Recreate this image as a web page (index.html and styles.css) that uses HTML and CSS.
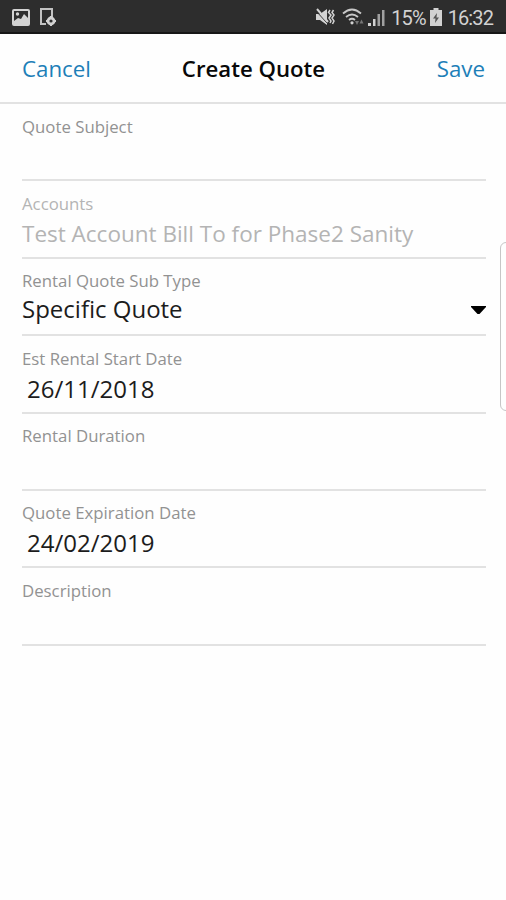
FILE: index.html
```html
<!DOCTYPE html>
<html lang="en">
<head>
<meta charset="utf-8">
<title>Create Quote</title>
<link rel="stylesheet" href="styles.css">
</head>
<body>
<div class="status">
  <div class="status-left">
    <svg width="18" height="17" viewBox="0 0 18 17"><rect x="1" y="1" width="16" height="15" rx="1" fill="none" stroke="#d2d2d2" stroke-width="2"/><path d="M2 12l4-3 3 1 3-5 4 4v6H2z" fill="#d2d2d2"/><circle cx="5.500" cy="5" r="1.700" fill="#d2d2d2"/></svg>
    <svg width="18" height="18" viewBox="0 0 18 18"><path d="M7 16H2V1h11v8" fill="none" stroke="#c2c2c2" stroke-width="2"/><circle cx="12" cy="13" r="3" fill="none" stroke="#d2d2d2" stroke-width="2.800"/><path d="M12 8v2M12 16v2M7 13h2M15 13h2" stroke="#d2d2d2" stroke-width="2"/></svg>
  </div>
  <div class="status-right">
    <svg class="mute" width="19" height="18" viewBox="0 0 19 18"><path d="M0 6h4l7-5v16l-7-5H0z" fill="#d2d2d2"/><path d="M0 3l12 13" stroke="#2d2d2d" stroke-width="1"/><path d="M1 1l11 13" stroke="#d2d2d2" stroke-width="2"/><path d="M14 2l-1.500 2.500L15 7l-2 3 2 3-1 2M17.500 2L16 4.500 18 7l-2 3 2 3-1.500 3" fill="none" stroke="#d2d2d2" stroke-width="1.500"/></svg>
    <svg class="wifi" width="23" height="18" viewBox="0 0 23 18"><path d="M1 5.500Q10 -2.500 19 5.500M4 9q6-5 12 0M7 12q3-2.500 6 0" fill="none" stroke="#c8c8c8" stroke-width="1.800"/><circle cx="10" cy="14.800" r="1.600" fill="#d2d2d2"/><path d="M13 13h4l-2 4zM17.500 15.500l2-4 2 4z" fill="#777"/></svg>
    <svg class="signal" width="17" height="17" viewBox="0 0 17 17"><path d="M0 14h3v3H0zM5 10h2.500v7H5z" fill="#d2d2d2"/><path d="M9.500 5H12v12H9.500zM14 1h2.500v16H14z" fill="#a0a0a0"/></svg>
    <span class="percent">15%</span>
    <svg class="battery" width="12" height="18" viewBox="0 0 12 18"><path d="M3.500 0h5v2H12v16H0V2h3.500z" fill="#d2d2d2"/><path d="M7 5L3 10.500h2.500L5 15l4-5.500H6.500z" fill="#555"/></svg>
    <span class="clock">16:32</span>
  </div>
</div>
<header class="bar">
  <a class="action">Cancel</a>
  <h1 class="title">Create Quote</h1>
  <a class="action save">Save</a>
</header>
<main class="form">
  <div class="field"><span class="label">Quote Subject</span></div>
  <div class="field disabled"><span class="label">Accounts</span><span class="value account">Test Account Bill To for Phase2 Sanity</span></div>
  <div class="field"><span class="label">Rental Quote Sub Type</span><span class="value">Specific Quote</span><svg class="caret" width="15" height="8" viewBox="0 0 15 8"><path d="M0 0h15v1L8.500 8h-2L0 1z"/></svg></div>
  <div class="field"><span class="label">Est Rental Start Date</span><span class="value date">26/11/2018</span></div>
  <div class="field"><span class="label">Rental Duration</span></div>
  <div class="field"><span class="label">Quote Expiration Date</span><span class="value date">24/02/2019</span></div>
  <div class="field"><span class="label">Description</span></div>
</main>
<div class="edge-handle"></div>
</body>
</html>
```
FILE: styles.css
```css
* { box-sizing: border-box; }
body {
  margin: 0;
  width: 506px;
  height: 900px;
  position: relative;
  overflow: hidden;
  background: #fefefe;
  font-family: "Open Sans", "Noto Sans", sans-serif;
}
.status {
  height: 34px;
  background: #2d2d2d;
  border-bottom: 2px solid #171717;
  display: flex;
  justify-content: space-between;
  padding: 2px 13px 0 12px;
  color: #d2d2d2;
  font: 20px/32px Roboto, sans-serif;
}
.status-left, .status-right { display: flex; align-items: center; }
.status-left { gap: 9px; }
.mute { margin-right: 7px; }
.wifi { margin-right: 3px; }
.signal { margin-right: 6px; }
.battery { margin: 0 6px 0 4px; }
.percent, .clock { padding-top: 2px; letter-spacing: -0.9px; }
.bar {
  height: 70px;
  padding: 1px 21px 0 22px;
  border-bottom: 2px solid #e2e2e2;
  display: grid;
  grid-template-columns: 1fr auto 1fr;
  align-items: center;
}
.action { color: #1d7fb8; font-size: 22.3px; line-height: 30px; }
.save { text-align: right; }
.title { margin: 0; color: #080808; font-size: 22.2px; line-height: 30px; font-weight: 600; }
.form { padding: 0 20px 0 22px; }
.field {
  position: relative;
  height: 77.4px;
  border-bottom: 2px solid #e2e2e2;
  display: flex;
  flex-direction: column;
  padding-top: 11.5px;
}
.label { color: #929292; font-size: 16.8px; line-height: 22px; white-space: nowrap; }
.value { color: #1c1c1c; font-size: 24px; line-height: 34px; white-space: nowrap; }
.date { line-height: 37px; padding-left: 5px; }
.account { font-size: 22.5px; line-height: 38px; }
.disabled .label, .disabled .value { color: #b4b4b4; }
.caret { position: absolute; right: 0; top: 47px; }
.edge-handle {
  position: absolute;
  left: 500px;
  top: 242px;
  width: 12px;
  height: 169px;
  border: 1px solid #c6c6c6;
  border-radius: 7px;
}
```
